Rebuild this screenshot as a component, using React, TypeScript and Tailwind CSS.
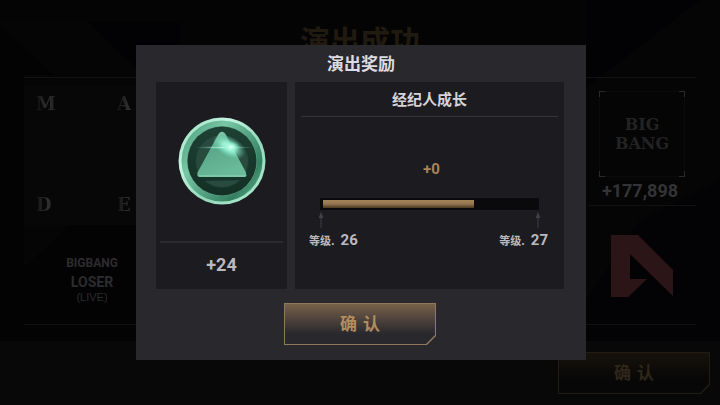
import type { ReactNode } from "react";

const LATIN = "font-[Roboto,'Noto_Sans_CJK_SC',sans-serif]";
const CJK = "font-['Noto_Sans_CJK_SC',sans-serif]";

function Backdrop() {
  return (
    <svg
      className="absolute inset-0 h-full w-full"
      viewBox="0 0 720 405"
      preserveAspectRatio="none"
      aria-hidden="true"
    >
      <rect width="720" height="405" fill="#050505" />
      <path d="M0 0H600V75H144L88 22H0Z" fill="#040405" />
      <path d="M88 22H180V75H144Z" fill="#020205" />
      <path d="M0 25L54 75H24V341H0Z" fill="#030304" />
      <path d="M586 0H700L586 88Z" fill="#020205" />
      <path d="M0 290L70 225H136V341H0Z" fill="#030304" />
      <path d="M640 220L720 180V341H586V300Z" fill="#030305" />
    </svg>
  );
}

function CutButton({ children, dim = false }: { children: ReactNode; dim?: boolean }) {
  return (
    <button
      type="button"
      className={
        "h-[42px] w-[152px] p-px [clip-path:polygon(0_0,100%_0,100%_calc(100%-9px),calc(100%-9px)_100%,0_100%)] " +
        (dim ? "bg-[#211c14]" : "bg-[#8f7a5c]")
      }
    >
      <span
        className={
          "flex h-full w-full items-center justify-center pt-0.5 text-[17px] font-bold font-['DejaVu_Sans','Noto_Sans_CJK_SC',sans-serif] [clip-path:polygon(0_0,100%_0,100%_calc(100%-9px),calc(100%-9px)_100%,0_100%)] " +
          (dim
            ? "bg-linear-to-b from-[#17120b] to-[#070707] to-70% text-[#30261a]"
            : "bg-linear-to-b from-[#78614a] to-[#29282d] to-75% text-[#b38d5d]")
        }
      >
        {children}
      </span>
    </button>
  );
}

function GemToken() {
  return (
    <svg className="size-[88px]" viewBox="0 0 88 88" role="img" aria-label="绿色徽章">
      <defs>
        <linearGradient id="rim" x1="0" y1="0" x2="1" y2="1">
          <stop offset="0" stopColor="#8fd8b8" />
          <stop offset="0.3" stopColor="#c4f5e0" />
          <stop offset="0.6" stopColor="#93d8b9" />
          <stop offset="1" stopColor="#b0ecd1" />
        </linearGradient>
        <linearGradient id="band" x1="0" y1="0.1" x2="1" y2="0.9">
          <stop offset="0" stopColor="#4f9f80" />
          <stop offset="0.3" stopColor="#78c8a5" />
          <stop offset="0.55" stopColor="#54a183" />
          <stop offset="0.8" stopColor="#347f61" />
          <stop offset="1" stopColor="#63b491" />
        </linearGradient>
        <linearGradient id="well" x1="0" y1="0" x2="0" y2="1">
          <stop offset="0" stopColor="#1d4134" />
          <stop offset="1" stopColor="#142f25" />
        </linearGradient>
        <linearGradient id="gem" x1="0" y1="0" x2="0.4" y2="1">
          <stop offset="0" stopColor="#93dcbd" />
          <stop offset="0.45" stopColor="#5ba88a" />
          <stop offset="1" stopColor="#6abb99" />
        </linearGradient>
        <radialGradient id="flare">
          <stop offset="0" stopColor="#f7fffd" />
          <stop offset="0.35" stopColor="#a8fbe0" stopOpacity="0.9" />
          <stop offset="1" stopColor="#62dcb1" stopOpacity="0" />
        </radialGradient>
      </defs>
      <circle cx="44" cy="44" r="43.5" fill="url(#rim)" />
      <circle cx="44" cy="44" r="40.5" fill="url(#band)" />
      <circle cx="44" cy="44" r="35" fill="#5d9d82" />
      <circle cx="44" cy="44" r="34.5" fill="url(#well)" />
      <circle cx="44" cy="44" r="26.5" fill="#294b3f" stroke="#1b3b2f" />
      <path d="M20 57L24 64L68 63L68 58Z" fill="#15342a" />
      <path
        d="M40.500 17Q44 12.500 47.500 17L68 55.500Q69 60 65.500 60H22.500Q18.500 60 19.500 55.500Z"
        fill="url(#gem)"
      />
      <path d="M19.500 58Q20 60 22.500 60H65.500Q68.500 60 68.500 58Z" fill="#7cc7a5" />
      <ellipse cx="51" cy="30" rx="18" ry="10" fill="url(#flare)" transform="rotate(30 51 30)" />
      <ellipse cx="46" cy="30.500" rx="30" ry="1.500" fill="url(#flare)" opacity="0.6" />
      <ellipse cx="53" cy="30" rx="9" ry="6" fill="url(#flare)" />
    </svg>
  );
}

function UpArrow() {
  return (
    <svg className="h-4 w-2" viewBox="0 0 8 16" aria-hidden="true">
      <path d="M4 0L6.500 6H1.500Z" fill="#414045" />
      <path d="M4 6V16" stroke="#343338" strokeWidth="1.500" />
    </svg>
  );
}

function Level({ value }: { value: number }) {
  return (
    <p className="flex items-center gap-1.5 leading-5 font-bold text-[#bbb9be]">
      <span className={"text-[11px] " + CJK}>等级.</span>
      <span className="text-[15px]">{value}</span>
    </p>
  );
}

function ResultPage() {
  return (
    <div className="relative flex min-h-screen flex-col">
      <Backdrop />
      <header className="relative flex h-[77px] items-center justify-center">
        <h1 className={"text-[30px] leading-10 font-bold text-[#211a10] " + CJK}>演出成功</h1>
      </header>
      <main className="relative mx-6 flex flex-1 justify-between border-y border-[#111113]">
        <section className="flex w-1/4 flex-col pt-2">
          <div className="grid h-[139px] grid-cols-[81px_81px] content-between bg-[#070707] px-3 pt-2 pb-2.5 font-['DejaVu_Serif',serif] text-[18px] leading-5 font-bold">
            {["M", "A", "D", "E"].map((letter) => (
              <span
                key={letter}
                className="bg-linear-to-r from-[#151515] via-[#303030] to-[#151515] bg-[length:24px_100%] bg-clip-text text-transparent"
              >
                {letter}
              </span>
            ))}
          </div>
          <div className="mt-7 w-[136px] text-center font-bold text-[#2c2c2e]">
            <p className="text-[12px] leading-5">BIGBANG</p>
            <p className="text-[14px] leading-[18px]">LOSER</p>
            <p className="font-['Liberation_Sans',sans-serif] text-[11px] leading-3 font-normal">(LIVE)</p>
          </div>
        </section>
        <section className="flex w-[108px] flex-col items-center pt-[13px]">
          <div className="relative flex size-[86px] flex-col items-center justify-center border border-[#0b0b0b] bg-[#050505] font-['DejaVu_Serif',serif] text-[16px] leading-[19px] font-bold text-[#232323]">
            <i className="absolute -top-px -left-px size-1.5 border-t border-l border-[#2a2a2a]" />
            <i className="absolute -top-px -right-px size-1.5 border-t border-r border-[#2a2a2a]" />
            <i className="absolute -bottom-px -left-px size-1.5 border-b border-l border-[#2a2a2a]" />
            <i className="absolute -right-px -bottom-px size-1.5 border-r border-b border-[#2a2a2a]" />
            <span>BIG</span>
            <span>BANG</span>
          </div>
          <p className="w-full border-b border-[#111113] pt-0.5 pr-1 pb-0.5 text-center text-[18px] leading-6 font-bold text-[#343436]">
            +177,898
          </p>
          <svg className="mt-[29px] size-[62px]" viewBox="0 0 62 62" role="img" aria-label="评级 A">
            <path d="M0 0H27L62 35V61L19 19V44H36L17 62H0Z" fill="#2c1517" />
          </svg>
        </section>
      </main>
      <footer className="relative mt-4 flex h-16 items-center justify-end bg-[#080808] pr-2.5">
        <CutButton dim>确 认</CutButton>
      </footer>
    </div>
  );
}

function RewardDialog() {
  const progress = 151 / 214;

  return (
    <div className="fixed inset-0 flex items-center justify-center pl-0.5">
      <section
        role="dialog"
        aria-modal="true"
        aria-labelledby="reward-title"
        className="flex w-[450px] max-w-full flex-col items-center bg-[#29282d] pb-[15px]"
      >
        <h2
          id="reward-title"
          className={"pb-0.5 text-[17px] leading-[35px] font-bold text-[#dddbe0] " + CJK}
        >
          演出奖励
        </h2>
        <div className="flex w-full gap-2 pr-[22px] pl-5">
          <div className="flex w-[131px] flex-col items-center bg-[#1c1b20] px-1">
            <div className="flex h-[159px] items-center pb-0.5">
              <GemToken />
            </div>
            <p className="w-full border-t-2 border-[#2b2a2f] pt-2 pb-2.5 text-center text-[18px] leading-7 font-bold text-[#bbb9be]">
              +24
            </p>
          </div>
          <div className="flex flex-1 flex-col bg-[#1c1b20]">
            <h3
              className={
                "mx-1.5 border-b border-[#363539] text-center text-[15px] leading-[34px] font-bold text-[#d5d3d8] " + CJK
              }
            >
              经纪人成长
            </h3>
            <p className="mt-[42px] pl-1 text-center text-[15px] leading-5 font-bold text-[#a98558]">+0</p>
            <div className="mx-[25px] mt-[19px] h-3 bg-[#0a0a0c] py-0.5 pr-0.5 pl-[3px]">
              <div
                role="progressbar"
                aria-label="经纪人成长"
                aria-valuenow={Math.round(progress * 100)}
                className="h-2 bg-linear-to-b from-[#a58459] via-[#937553] to-[#49381f]"
                style={{ width: `${progress * 100}%` }}
              />
            </div>
            <div className="flex justify-between px-[22px] pt-0.5">
              <UpArrow />
              <UpArrow />
            </div>
            <div className="flex justify-between pt-0.5 pr-4 pl-3.5">
              <Level value={26} />
              <Level value={27} />
            </div>
          </div>
        </div>
        <div className="mt-3.5 flex pr-0.5">
          <CutButton>确 认</CutButton>
        </div>
      </section>
    </div>
  );
}

export default function App() {
  return (
    <div className={"bg-black " + LATIN}>
      <ResultPage />
      <RewardDialog />
    </div>
  );
}
